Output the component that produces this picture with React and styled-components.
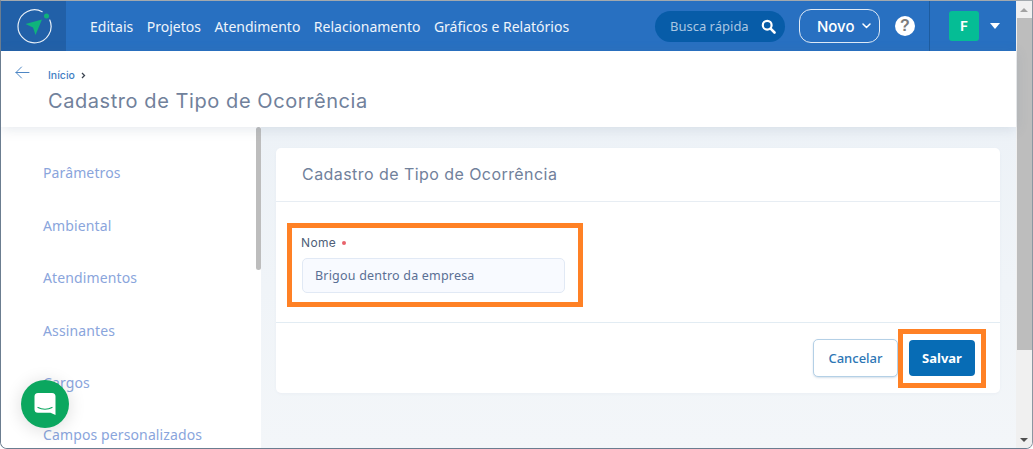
import React from "react";
import styled, { createGlobalStyle } from "styled-components";

const Global = createGlobalStyle`
  html, body { margin: 0; padding: 0; background: #fff; overflow: hidden; }
  * { box-sizing: border-box; }
  body { font-family: "Noto Sans", "Open Sans", sans-serif; }
`;

const Frame = styled.div`
  position: relative; width: 1033px; height: 449px; display: flex; overflow: hidden;
  border: 1px solid #6b7d90; border-top-color: #a3a9ae; border-right-color: #8b96a1;
  border-radius: 0 0 7px 7px; background: #fff;
`;
const Main = styled.div`flex: 1; min-width: 0; display: flex; flex-direction: column;`;

const Header = styled.header`height: 50px; flex: none; display: flex; align-items: center; background: #2870c1; color: #fff;`;
const LogoCell = styled.div`width: 65px; height: 100%; background: #2160a8; display: flex; align-items: center; justify-content: center; flex: none;`;
const Nav = styled.nav`display: flex; gap: 13.5px; margin-left: 24px; font-size: 14px; color: #eef4fb; white-space: nowrap;`;
const NavItem = styled.span`line-height: 19px;`;
const Right = styled.div`margin-left: auto; display: flex; align-items: center; height: 100%;`;
const Search = styled.div`
  width: 130px; height: 31px; border-radius: 16px; background: #075ca8; display: flex; align-items: center;
  justify-content: space-between; padding: 0 9px 0 15px; font-size: 13px; color: #a9c6e2;
`;
const NewButton = styled.div`
  width: 81px; height: 34px; margin-left: 14px; border: 1px solid #dfeaf6; border-radius: 12px; display: flex;
  align-items: center; justify-content: flex-start; padding-left: 17px; gap: 7px; font: 500 15px "Inter", sans-serif; color: #fff;
`;
const Help = styled.div`
  width: 20px; height: 20px; margin-left: 15px; border-radius: 50%; background: #fff; color: #7c7c7c; display: flex;
  align-items: center; justify-content: center; font: 700 16px "Liberation Sans", sans-serif;
`;
const UserArea = styled.div`
  height: 100%; width: 87px; margin-left: 14px; border-left: 1px solid #1d5c9f; display: flex; align-items: center; padding-left: 19px;
`;
const Avatar = styled.div`
  width: 30px; height: 30px; border-radius: 3px; background: #05bd95; color: #fff; display: flex; align-items: center;
  justify-content: center; font: 700 13px "Inter", sans-serif;
`;
const Caret = styled.div`
  margin-left: 11px; width: 0; height: 0; border-left: 5.5px solid transparent; border-right: 5.5px solid transparent; border-top: 6px solid #fff;
`;

const SubHeader = styled.div`
  height: 76px; flex: none; display: flex; background: #fff; box-shadow: 0 2px 12px rgba(90,110,140,.16); position: relative; z-index: 2;
`;
const Back = styled.div`width: 47px; flex: none; padding: 15px 0 0 14px; line-height: 0;`;
const Crumbs = styled.div`padding-top: 17px; display: flex; flex-direction: column;`;
const Crumb = styled.div`display: flex; align-items: center; gap: 6px; height: 14px; font: 500 10.5px "Inter", sans-serif; color: #3f7ec4;`;
const PageTitle = styled.h1`margin: 7px 0 0; font: 400 20px/24px "Inter", sans-serif; letter-spacing: .57px; color: #71819b; white-space: nowrap;`;

const Body = styled.div`flex: 1; min-height: 0; display: flex;`;
const Sidebar = styled.aside`width: 260px; flex: none; position: relative; background: #fff; padding: 20.4px 0 0 42px; overflow: hidden;`;
const SideItem = styled.div`height: 52.4px; font-size: 14px; line-height: 52.4px; letter-spacing: .12px; color: #8aa5dc; white-space: nowrap;`;
const SideThumb = styled.div`position: absolute; top: 0; right: 0; width: 5px; height: 143px; background: #bdbdbd; border-radius: 3px;`;

const Content = styled.main`flex: 1; min-width: 0; background: linear-gradient(180deg, #edf2f7, #f3f6f9); padding: 21px 16px 0 15px;`;
const Card = styled.section`height: 245px; background: #fff; border-radius: 5px; display: flex; flex-direction: column; box-shadow: 0 1px 3px rgba(120,140,170,.06);`;
const CardHead = styled.div`
  height: 54px; flex: none; border-bottom: 1px solid #e7edf3; padding: 0 0 2px 26px; display: flex; align-items: center;
  font: 400 16px "Inter", sans-serif; letter-spacing: .44px; color: #71819b;
`;
const CardBody = styled.div`height: 121px; flex: none; border-bottom: 1px solid #e2ecf3; padding: 34px 0 0 26px;`;
const Label = styled.div`margin-left: -1px; font: 400 12px/14px "Inter", sans-serif; letter-spacing: .35px; color: #4f5f78; display: flex; align-items: center; gap: 6px;`;
const Dot = styled.span`width: 4px; height: 4px; border-radius: 50%; background: #e8636b;`;
const Field = styled.div`
  margin-top: 8px; width: 263px; height: 35px; border: 1px solid #e1e9f5; border-radius: 5px; background: #f8faff; padding-left: 12px;
  display: flex; align-items: center; font-size: 12.5px; letter-spacing: .2px; color: #5a6f94;
`;
const CardFoot = styled.div`flex: 1; display: flex; justify-content: flex-end; align-items: flex-start; padding: 16px 25px 0 0; gap: 11px;`;
const Cancel = styled.div`
  width: 85px; height: 38px; border: 1px solid #b4d0e6; border-radius: 5px; background: #fff; display: flex; align-items: center; justify-content: center;
  font-size: 13px; font-weight: 500; color: #2d76b5; box-shadow: 0 1px 2px rgba(90,130,170,.25);
`;
const Save = styled.div`
  width: 66px; height: 36px; margin-top: 1px; border-radius: 4px; background: #076cb5; display: flex; align-items: center; justify-content: center;
  font-size: 13px; font-weight: 700; color: #fff;
`;

const Scrollbar = styled.div`width: 16px; flex: none; background: #f0f0f0; display: flex; flex-direction: column; align-items: center;`;
const ArrowSlot = styled.div`height: 17px; flex: none; display: flex; align-items: center; justify-content: center;`;
const Tri = styled.div`
  width: 0; height: 0; border-left: 4px solid transparent; border-right: 4px solid transparent;
  ${p => p.$up ? "border-bottom: 4px solid #a3a3a3;" : "border-top: 4px solid #505050;"}
`;
const Thumb = styled.div`width: 100%; height: 332px; flex: none; background: #bdbdbd; border-left: 1px solid #f0f0f0; border-right: 0;`;
const Track = styled.div`flex: 1;`;

const Highlight = styled.div`
  position: absolute; left: ${p => p.$x}px; top: ${p => p.$y}px; width: ${p => p.$w}px; height: ${p => p.$h}px;
  border: 5px solid #ff8125; pointer-events: none; z-index: 5;
`;
const Chat = styled.div`
  position: absolute; left: 20px; top: 379px; width: 48px; height: 48px; border-radius: 50%; background: #0ba75f;
  display: flex; align-items: center; justify-content: center; box-shadow: 0 2px 18px rgba(0,0,0,.14); z-index: 6;
`;

const Logo = () => (
  <svg width="36" height="36" viewBox="1 0.5 36 36" fill="none">
    <path d="M34.8 12.500A16.500 16.500 0 1 1 27.200 4.200" stroke="#e8f0f8" strokeWidth="1.2" strokeLinecap="round" />
    <circle cx="31.500" cy="8.500" r="2.500" fill="#10b27a" />
    <path d="M27 12 10.500 16.500 18 20 20.500 27.500z" fill="#0fb37b" />
  </svg>
);
const SearchIcon = () => (
  <svg width="15" height="15" viewBox="0 0 15 15" fill="none">
    <circle cx="6.2" cy="6.2" r="4.4" stroke="#fff" strokeWidth="2.2" />
    <path d="M9.6 9.6 13.5 13.5" stroke="#fff" strokeWidth="2.6" strokeLinecap="round" />
  </svg>
);
const Chevron = () => (
  <svg width="9" height="6" viewBox="0 0 9 6" fill="none">
    <path d="M1 1l3.500 3.500L8 1" stroke="#fff" strokeWidth="1.500" strokeLinecap="round" strokeLinejoin="round" />
  </svg>
);
const BackArrow = () => (
  <svg width="15" height="13" viewBox="0 0 15 13" fill="none">
    <path d="M14 6.500H1M6.500 1 1 6.500 6.500 12" stroke="#4d86c4" strokeWidth="1" strokeLinecap="round" strokeLinejoin="round" />
  </svg>
);
const CrumbArrow = () => (
  <svg width="5" height="7" viewBox="0 0 5 7" fill="none">
    <path d="M1 1l2.500 2.500L1 6" stroke="#3c4450" strokeWidth="1.300" />
  </svg>
);
const ChatIcon = () => (
  <svg width="22" height="24" viewBox="0 0 22 24" fill="none">
    <path d="M4 1h14a3.500 3.500 0 0 1 3.500 3.500V23l-5-2.200H4A3.500 3.500 0 0 1 .5 17.300V4.500A3.500 3.500 0 0 1 4 1z" fill="#fff" />
    <path d="M4 15.500c4 2.300 10 2.300 14 0" stroke="#0ba75f" strokeWidth="1.200" strokeLinecap="round" />
  </svg>
);

const nav = ["Editais", "Projetos", "Atendimento", "Relacionamento", "Gráficos e Relatórios"];
const side = ["Parâmetros", "Ambiental", "Atendimentos", "Assinantes", "Cargos", "Campos personalizados"];

export default function App() {
  return (
    <>
      <Global />
      <Frame>
        <Main>
          <Header>
            <LogoCell><Logo /></LogoCell>
            <Nav>{nav.map(n => <NavItem key={n}>{n}</NavItem>)}</Nav>
            <Right>
              <Search><span>Busca rápida</span><SearchIcon /></Search>
              <NewButton>Novo <Chevron /></NewButton>
              <Help>?</Help>
              <UserArea>
                <Avatar>F</Avatar>
                <Caret />
              </UserArea>
            </Right>
          </Header>
          <SubHeader>
            <Back><BackArrow /></Back>
            <Crumbs>
              <Crumb>Início <CrumbArrow /></Crumb>
              <PageTitle>Cadastro de Tipo de Ocorrência</PageTitle>
            </Crumbs>
          </SubHeader>
          <Body>
            <Sidebar>
              {side.map(s => <SideItem key={s}>{s}</SideItem>)}
              <SideThumb />
            </Sidebar>
            <Content>
              <Card>
                <CardHead>Cadastro de Tipo de Ocorrência</CardHead>
                <CardBody>
                  <Label>Nome <Dot /></Label>
                  <Field>Brigou dentro da empresa</Field>
                </CardBody>
                <CardFoot>
                  <Cancel>Cancelar</Cancel>
                  <Save>Salvar</Save>
                </CardFoot>
              </Card>
            </Content>
          </Body>
        </Main>
        <Scrollbar>
          <ArrowSlot><Tri $up /></ArrowSlot>
          <Thumb />
          <Track />
          <ArrowSlot><Tri /></ArrowSlot>
        </Scrollbar>
        <Highlight $x={286} $y={222} $w={296} $h={84} />
        <Highlight $x={897} $y={328} $w={88} $h={59} />
        <Chat><ChatIcon /></Chat>
      </Frame>
    </>
  );
}
